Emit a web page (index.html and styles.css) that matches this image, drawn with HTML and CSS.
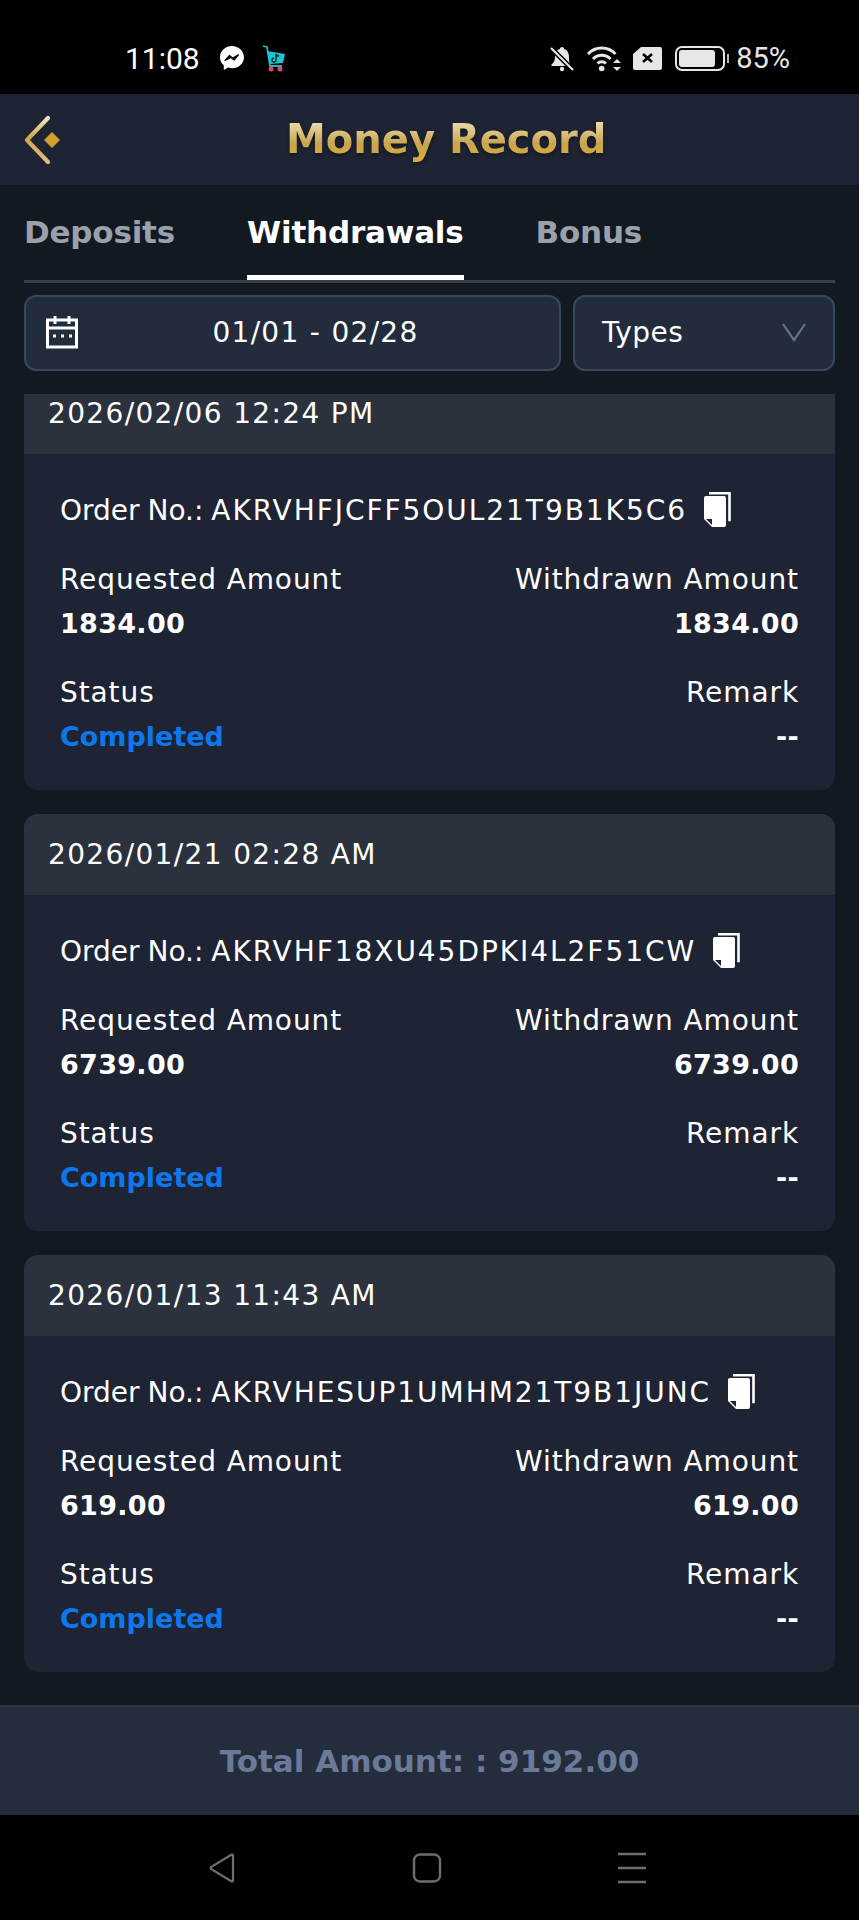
FILE: index.html
```html
<!DOCTYPE html>
<html lang="en">
<head>
  <meta charset="UTF-8">
  <title>Money Record</title>
  <link rel="stylesheet" href="styles.css">
</head>
<body>
  <div class="phone">
    <div class="status-bar">
      <div class="status-left">
        <span class="clock">11:08</span>
        <svg class="messenger" width="26" height="26" viewBox="0 0 26 26">
          <path d="M13 1C6.4 1 1 5.9 1 12.2c0 3.3 1.4 6.100 3.800 8.100V25l4.300-2.400c1.200.4 2.600.6 3.900.6 6.600 0 12-4.900 12-11S19.600 1 13 1z" fill="#fff"/>
          <path d="M6 15.500l4.500-5 3.200 2.600 5.800-3.300-4.400 5.200-3.300-2.600z" fill="#000" stroke="#000" stroke-width="1.200" stroke-linejoin="round"/>
        </svg>
        <svg class="cart" width="24" height="27" viewBox="0 0 24 27">
          <path d="M1 1l4 1 3 19h12" fill="none" stroke="#1fb6c4" stroke-width="1.800"/>
          <path d="M5 6l18 3-2 9-13 1z" fill="#22c3d0"/>
          <path d="M14 9v6a2 2 0 1 1-2-2M14 9c.5 1.500 1.500 2 3 2" fill="none" stroke="#10303a" stroke-width="1.500"/>
          <circle cx="9" cy="24" r="2.500" fill="#e5455f"/>
          <circle cx="18" cy="24" r="2.500" fill="#e5455f"/>
        </svg>
      </div>
      <div class="status-right">
        <svg width="26" height="27" viewBox="0 0 26 27">
          <path d="M13 2c-1.500 0-2 1-2.200 2C7.500 5 6 8 6 12c0 3-1 5.500-3.500 7.500V21h19v-1.500C20 17.500 20 15 20 12c0-4-1.500-7-4.800-8C15 3 14.500 2 13 2z" fill="#e6e6e6"/>
          <circle cx="13" cy="24" r="2.200" fill="#e6e6e6"/>
          <path d="M2 3l22 22" stroke="#000" stroke-width="5"/>
          <path d="M2 3l22 22" stroke="#e6e6e6" stroke-width="2.200"/>
        </svg>
        <svg width="36" height="27" viewBox="0 0 36 27">
          <path d="M2 9c7.500-8 20-8 27.500 0M7 14c5-5 12.500-5 17.500 0M11.500 18.500c2.500-2.500 6-2.500 8.500 0" fill="none" stroke="#e6e6e6" stroke-width="3"/>
          <circle cx="15.700" cy="23.500" r="2.800" fill="#e6e6e6"/>
          <path d="M31 14l4 4h-8zM31 26l-4-4h8z" fill="#e6e6e6"/>
        </svg>
        <svg width="29" height="24" viewBox="0 0 29 24">
          <path d="M8 1h19a2 2 0 0 1 2 2v19a2 2 0 0 1-2 2H2a2 2 0 0 1-2-2V8z" fill="#e6e6e6"/>
          <path d="M10 8l9 8M19 8l-9 8" stroke="#000" stroke-width="2.600"/>
        </svg>
        <div class="battery"><div class="battery-fill"></div></div>
        <span class="battery-pct">85%</span>
      </div>
    </div>

    <header class="top-bar">
      <svg class="back" width="36" height="50" viewBox="0 0 36 50">
        <defs>
          <linearGradient id="backGold" x1="0" y1="0" x2="0" y2="1">
            <stop offset="0" stop-color="#f4e6c0"/>
            <stop offset="0.45" stop-color="#d0a548"/>
            <stop offset="1" stop-color="#e2bf7a"/>
          </linearGradient>
        </defs>
        <path d="M24 3L3 25l21 22" fill="none" stroke="url(#backGold)" stroke-width="4.200" stroke-linecap="round" stroke-linejoin="round"/>
        <path d="M28 17l8 8-8 8-8-8z" fill="#d0a02f"/>
      </svg>
      <h1 class="title">Money Record</h1>
    </header>

    <nav class="tabs">
      <div class="tab">Deposits</div>
      <div class="tab active">Withdrawals</div>
      <div class="tab">Bonus</div>
    </nav>

    <div class="filters">
      <div class="filter date-filter">
        <svg width="32" height="34" viewBox="0 0 32 34">
          <rect x="1.500" y="5" width="29" height="27" fill="none" stroke="#fff" stroke-width="3"/>
          <path d="M1 13h30M9 1v8M23 1v8" stroke="#fff" stroke-width="3"/>
          <path d="M7 21h3M15 21h3M23 21h3" stroke="#fff" stroke-width="3"/>
        </svg>
        <span class="date-text">01/01 - 02/28</span>
      </div>
      <div class="filter type-filter">
        <span>Types</span>
        <svg width="26" height="20" viewBox="0 0 26 20">
          <path d="M2 2l11 16L24 2" fill="none" stroke="#66758c" stroke-width="2.200"/>
        </svg>
      </div>
    </div>

    <main class="list">
      <div class="list-inner">
        <section class="card">
          <div class="card-head">2026/02/06 12:24 PM</div>
          <div class="card-body">
            <div class="order-row">
              <span>Order No.: <span class="order-code">AKRVHFJCFF5OUL21T9B1K5C6</span></span>
              <svg class="copy" width="27" height="35" viewBox="0 0 27 35"><use href="#copyIcon"/></svg>
            </div>
            <div class="info-row">
              <div><p>Requested Amount</p><p class="val">1834.00</p></div>
              <div class="right"><p>Withdrawn Amount</p><p class="val">1834.00</p></div>
            </div>
            <div class="info-row">
              <div><p>Status</p><p class="val blue">Completed</p></div>
              <div class="right"><p>Remark</p><p class="val">--</p></div>
            </div>
          </div>
        </section>

        <section class="card">
          <div class="card-head">2026/01/21 02:28 AM</div>
          <div class="card-body">
            <div class="order-row">
              <span>Order No.: <span class="order-code">AKRVHF18XU45DPKI4L2F51CW</span></span>
              <svg class="copy" width="27" height="35" viewBox="0 0 27 35"><use href="#copyIcon"/></svg>
            </div>
            <div class="info-row">
              <div><p>Requested Amount</p><p class="val">6739.00</p></div>
              <div class="right"><p>Withdrawn Amount</p><p class="val">6739.00</p></div>
            </div>
            <div class="info-row">
              <div><p>Status</p><p class="val blue">Completed</p></div>
              <div class="right"><p>Remark</p><p class="val">--</p></div>
            </div>
          </div>
        </section>

        <section class="card">
          <div class="card-head">2026/01/13 11:43 AM</div>
          <div class="card-body">
            <div class="order-row">
              <span>Order No.: <span class="order-code">AKRVHESUP1UMHM21T9B1JUNC</span></span>
              <svg class="copy" width="27" height="35" viewBox="0 0 27 35"><use href="#copyIcon"/></svg>
            </div>
            <div class="info-row">
              <div><p>Requested Amount</p><p class="val">619.00</p></div>
              <div class="right"><p>Withdrawn Amount</p><p class="val">619.00</p></div>
            </div>
            <div class="info-row">
              <div><p>Status</p><p class="val blue">Completed</p></div>
              <div class="right"><p>Remark</p><p class="val">--</p></div>
            </div>
          </div>
        </section>
      </div>
    </main>

    <footer class="total">Total Amount: : 9192.00</footer>

    <div class="nav-bar">
      <svg width="28" height="30" viewBox="0 0 28 30">
        <path d="M25 2.500v25a1 1 0 0 1-1.700.7L3 16a1.500 1.500 0 0 1 0-2L23.300 1.800a1 1 0 0 1 1.700.7z" fill="none" stroke="#6e6e6e" stroke-width="2.200"/>
      </svg>
      <svg width="30" height="30" viewBox="0 0 30 30">
        <rect x="2" y="1.500" width="26" height="27" rx="6" fill="none" stroke="#6e6e6e" stroke-width="2.400"/>
      </svg>
      <svg width="30" height="32" viewBox="0 0 30 32">
        <path d="M1 2h28M1 16h28M1 30h28" stroke="#6e6e6e" stroke-width="2.600"/>
      </svg>
    </div>
  </div>

  <svg width="0" height="0" class="defs">
    <defs>
      <g id="copyIcon">
        <path d="M5 1.200h20.500v28" fill="none" stroke="#fff" stroke-width="2.600"/>
        <path d="M2 4h18a2 2 0 0 1 2 2v27a2 2 0 0 1-2 2H8l-8-8V6a2 2 0 0 1 2-2z" fill="#fff"/>
        <path d="M2 27h6v6z" fill="#1e2433"/>
      </g>
    </defs>
  </svg>
</body>
</html>
```

FILE: styles.css
```css
* {
  box-sizing: border-box;
}
body {
  margin: 0;
  background-color: #121921;
  font-family: "DejaVu Sans", sans-serif;
  color: #fff;
}
p {
  margin: 0;
}
.defs {
  display: block;
  height: 0;
}
.phone {
  width: 859px;
  height: 1920px;
  display: flex;
  flex-direction: column;
  overflow: hidden;
}

/* status bar */
.status-bar {
  height: 94px;
  flex: none;
  background-color: #000;
  padding: 22px 69px 0 125px;
  display: flex;
  justify-content: space-between;
  align-items: center;
}
.status-left,
.status-right {
  display: flex;
  align-items: center;
}
.clock {
  font-family: Roboto, sans-serif;
  font-size: 30px;
  margin-right: 19px;
}
.messenger {
  margin-right: 17px;
}
.status-right {
  gap: 11px;
}
.battery {
  width: 50px;
  height: 25px;
  border: 2px solid #e6e6e6;
  border-radius: 7px;
  padding: 2px;
  margin-left: 2px;
  position: relative;
}
.battery::after {
  content: "";
  position: absolute;
  right: -6px;
  top: 6px;
  width: 2px;
  height: 9px;
  background-color: #bbb;
}
.battery-fill {
  width: 85%;
  height: 100%;
  background-color: #e6e6e6;
  border-radius: 3px;
}
.battery-pct {
  font-family: Roboto, sans-serif;
  font-size: 29px;
  color: #e6e6e6;
}

/* header */
.top-bar {
  height: 91px;
  flex: none;
  background-color: #1e2433;
  display: flex;
  align-items: center;
  padding-left: 24px;
}
.title {
  margin: 0 0 2px 226px;
  font-size: 40px;
  font-weight: 700;
  background: linear-gradient(180deg, #e9d9a8 15%, #c9a54e 60%, #d9ab38 100%);
  -webkit-background-clip: text;
  background-clip: text;
  color: transparent;
  filter: drop-shadow(0 2px 2px rgba(0, 0, 0, 0.4));
}

/* tabs */
.tabs {
  margin: 0 24px;
  height: 98px;
  flex: none;
  display: flex;
  gap: 72px;
  border-bottom: 3px solid #373f4c;
}
.tab {
  font-size: 31px;
  font-weight: 700;
  letter-spacing: -0.2px;
  color: #9aa1ad;
  padding-top: 29px;
  height: 95px;
}
.tab.active {
  color: #fff;
  border-bottom: 5px solid #fff;
}

/* filters */
.filters {
  margin: 12px 24px 0;
  display: flex;
  gap: 12px;
  flex: none;
}
.filter {
  height: 76px;
  background-color: #222c3c;
  border: 2px solid #39465f;
  border-radius: 12px;
  padding-bottom: 2px;
  display: flex;
  align-items: center;
  font-size: 28px;
}
.date-filter {
  width: 537px;
  padding-left: 20px;
}
.date-text {
  flex: 1;
  text-align: center;
  letter-spacing: 1.3px;
  padding-right: 6px;
}
.type-filter {
  width: 262px;
  padding-left: 27px;
  padding-right: 26px;
  justify-content: space-between;
  letter-spacing: 0.5px;
}

/* list */
.list {
  margin-top: 23px;
  flex: 1;
  min-height: 0;
  overflow: hidden;
  padding: 0 24px;
}
.list-inner {
  margin-top: -21px;
  display: flex;
  flex-direction: column;
  gap: 24px;
}
.card {
  height: 417px;
  background-color: #1e2433;
  border-radius: 14px;
  overflow: hidden;
}
.card-head {
  height: 81px;
  background-color: #2b313d;
  padding: 0 24px;
  display: flex;
  align-items: center;
  font-size: 28px;
  letter-spacing: 1.35px;
}
.card-body {
  padding: 35px 36px 0;
  font-size: 28px;
  line-height: 44px;
}
.order-row {
  display: flex;
  align-items: center;
  gap: 17px;
  word-spacing: -1px;
  margin-bottom: 25px;
}
.order-code {
  letter-spacing: 1.95px;
}
.copy {
  margin-top: -4px;
}
.info-row {
  display: flex;
  justify-content: space-between;
  margin-bottom: 25px;
  letter-spacing: 0.9px;
}
.right {
  text-align: right;
}
.val {
  font-size: 27px;
  font-weight: 700;
  letter-spacing: 0.3px;
}
.blue {
  color: #0d78ee;
  letter-spacing: 0;
}

/* footer */
.total {
  height: 110px;
  flex: none;
  background-color: #232d3c;
  border-top: 2px solid #2a3644;
  display: flex;
  align-items: center;
  justify-content: center;
  font-size: 31px;
  font-weight: 700;
  color: #6b7a99;
}
.nav-bar {
  height: 105px;
  flex: none;
  background-color: #000;
  padding: 0 212px 0 208px;
  display: flex;
  justify-content: space-between;
  align-items: center;
}
```
